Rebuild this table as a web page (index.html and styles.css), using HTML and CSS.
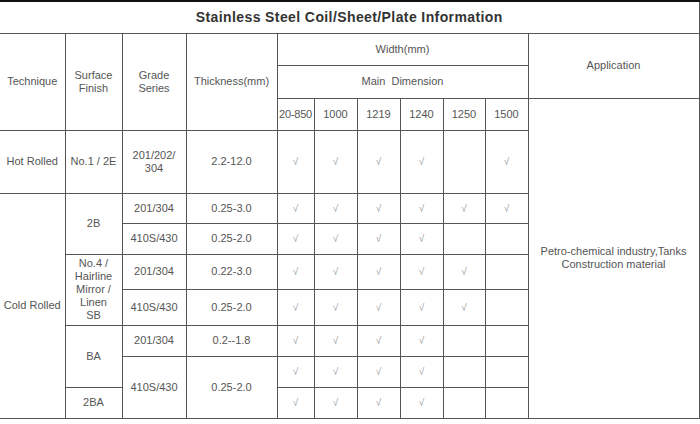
FILE: index.html
```html
<!DOCTYPE html>
<html>
<head>
<meta charset="utf-8">
<link rel="stylesheet" href="styles.css">
</head>
<body>
<table class="spec">
  <colgroup>
    <col class="c-tech"><col class="c-surf"><col class="c-grade"><col class="c-thick">
    <col class="c-w1"><col class="c-w2"><col class="c-w3"><col class="c-w4"><col class="c-w5"><col class="c-w6">
    <col class="c-app">
  </colgroup>
  <tr class="r-title"><th colspan="11" class="title">Stainless Steel Coil/Sheet/Plate Information</th></tr>
  <tr class="r-width">
    <td rowspan="3">Technique</td>
    <td rowspan="3">Surface<br>Finish</td>
    <td rowspan="3">Grade<br>Series</td>
    <td rowspan="3">Thickness(mm)</td>
    <td colspan="6">Width(mm)</td>
    <td rowspan="2">Application</td>
  </tr>
  <tr class="r-main"><td colspan="6">Main&nbsp; Dimension</td></tr>
  <tr class="r-dims">
    <td class="tight">20-850</td><td>1000</td><td>1219</td><td>1240</td><td>1250</td><td>1500</td>
    <td rowspan="9" class="app">Petro-chemical industry,Tanks<br>Construction material</td>
  </tr>
  <tr class="r-hot">
    <td>Hot Rolled</td><td>No.1 / 2E</td><td>201/202/<br>304</td><td>2.2-12.0</td>
    <td class="ok">√</td><td class="ok">√</td><td class="ok">√</td><td class="ok">√</td><td></td><td class="ok">√</td>
  </tr>
  <tr class="r-a">
    <td rowspan="7">Cold Rolled</td><td rowspan="2">2B</td><td>201/304</td><td>0.25-3.0</td>
    <td class="ok">√</td><td class="ok">√</td><td class="ok">√</td><td class="ok">√</td><td class="ok">√</td><td class="ok">√</td>
  </tr>
  <tr class="r-b">
    <td>410S/430</td><td>0.25-2.0</td>
    <td class="ok">√</td><td class="ok">√</td><td class="ok">√</td><td class="ok">√</td><td></td><td></td>
  </tr>
  <tr class="r-c">
    <td rowspan="2" class="multi">No.4 /<br>Hairline<br>Mirror /<br>Linen<br>SB</td><td>201/304</td><td>0.22-3.0</td>
    <td class="ok">√</td><td class="ok">√</td><td class="ok">√</td><td class="ok">√</td><td class="ok">√</td><td></td>
  </tr>
  <tr class="r-d">
    <td>410S/430</td><td>0.25-2.0</td>
    <td class="ok">√</td><td class="ok">√</td><td class="ok">√</td><td class="ok">√</td><td class="ok">√</td><td></td>
  </tr>
  <tr class="r-e">
    <td rowspan="2">BA</td><td>201/304</td><td>0.2--1.8</td>
    <td class="ok">√</td><td class="ok">√</td><td class="ok">√</td><td class="ok">√</td><td></td><td></td>
  </tr>
  <tr class="r-f">
    <td rowspan="2">410S/430</td><td rowspan="2">0.25-2.0</td>
    <td class="ok">√</td><td class="ok">√</td><td class="ok">√</td><td class="ok">√</td><td></td><td></td>
  </tr>
  <tr class="r-g">
    <td>2BA</td>
    <td class="ok">√</td><td class="ok">√</td><td class="ok">√</td><td class="ok">√</td><td></td><td></td>
  </tr>
</table>
</body>
</html>
```
FILE: styles.css
```css
html, body {
  margin: 0;
  padding: 0;
  background: #ffffff;
}

.spec {
  border-collapse: collapse;
  table-layout: fixed;
  width: 699px;
  font-family: "Liberation Sans", Arial, sans-serif;
  font-size: 11px;
  line-height: 13px;
  color: #555;
  border-top: 2px solid #111;
  border-right: 1px solid #222;
}

.spec td, .spec th {
  border: 1px solid #555;
  text-align: center;
  vertical-align: middle;
  padding: 0;
}

.spec tr > :first-child { border-left: none; }
.spec .title { border-left: none; border-top: 2px solid #111; }

.c-tech { width: 65px; }
.c-surf { width: 57px; }
.c-grade { width: 64px; }
.c-thick { width: 91px; }
.c-w1 { width: 37px; }
.c-w2 { width: 43px; }
.c-w3 { width: 43px; }
.c-w4 { width: 43px; }
.c-w5 { width: 42px; }
.c-w6 { width: 43px; }
.c-app { width: 171px; }

.title {
  font-size: 14px;
  font-weight: bold;
  color: #333;
  letter-spacing: 0.4px;
}

.r-title { height: 32px; }
.r-width { height: 32px; }
.r-main { height: 33px; }
.r-dims { height: 32px; }
.r-hot { height: 63px; }
.r-a { height: 30px; }
.r-b { height: 31px; }
.r-c { height: 35px; }
.r-d { height: 36px; }
.r-e { height: 31px; }
.r-f { height: 31px; }
.r-g { height: 31px; }

.ok {
  color: #999;
  font-size: 10px;
}

.tight { letter-spacing: -0.2px; }

.app { color: #555; }
```
